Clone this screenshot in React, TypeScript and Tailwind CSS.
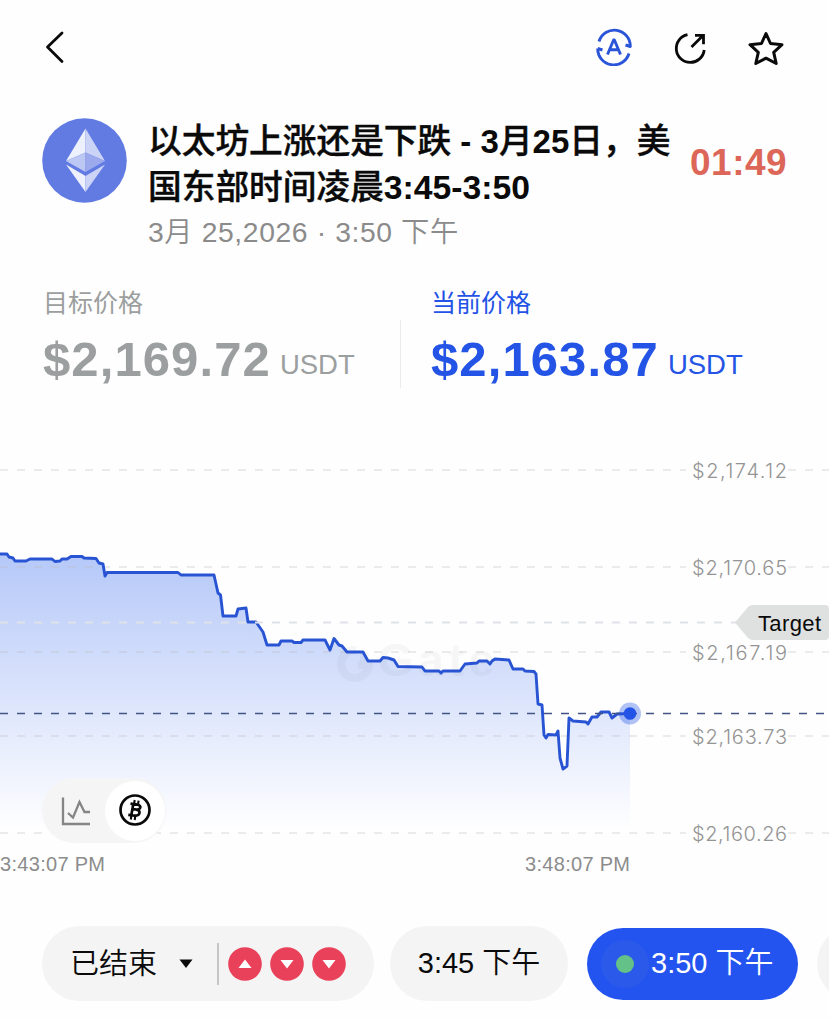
import type { ReactNode } from "react";

const LINE =
  "0,554 7,554 9,557 13,558 15,561 26,561 30,559 52,559 55,561.5 60,561 62,559 67,559 71,556.5 82,556.5 84,558 96,558.5 99,563 103,564 105,576 107,572.5 178,572.5 181,575 214,575 218,593 220.5,595 223,616 236,616 238,609 246,608 248,622 256,622 263,632 267,645 279,645 281,641 292,641 294,642.5 301,642.5 303,640 325,640 330,650 334,638.5 339,645 342,646 347,652 363,652 368,661 380,661 383,657.5 388,658 394,660 398,666.5 422,667 425,671 439,671 441,673 443,671 460,671 465,664 477,663 479,661 487,661 490,664 492,661 495,659 509,660 513,669 523,669 525,671 534,671.5 536,674 538,704 542,705 544,735 546,738 548,734.5 556,735 558,731 560,758 563,769 567,766 569,718 573,721 586,722 588,724 592,717 597,717 601,712 609,712 612,718 617,714 630,713.5";

const TICKS = [
  { y: 470, label: "$2,174.12" },
  { y: 567, label: "$2,170.65" },
  { y: 652, label: "$2,167.19" },
  { y: 736, label: "$2,163.73" },
  { y: 833, label: "$2,160.26" },
];

function Header() {
  return (
    <header className="flex h-24 items-center justify-between pr-[44px] pl-[45px]">
      <svg width="20" height="36" viewBox="0 0 20 36" fill="none" stroke="#0a0a0a" strokeWidth="2.8" strokeLinecap="round" strokeLinejoin="round" className="-mt-[2px]">
        <path d="M17 4 2.5 18 17 32.500" />
      </svg>
      <div className="flex items-center gap-[38px]">
        <svg width="38" height="38" viewBox="0 0 38 38" fill="none" stroke="#2b55d9" strokeWidth="2.9" strokeLinejoin="round" className="-mt-[2px]">
          <path d="M4 13.500A16 16 0 0 1 35.300 18.500L30.500 17M2.700 20.500A16 16 0 0 0 34 25.500M2.700 20.500 7.500 22" />
          <path d="M12.500 26.500 18.600 12h.8l6.100 14.500M14.800 21.800h8.400" strokeWidth="2.9" />
        </svg>
        <svg width="38" height="38" viewBox="0 0 38 38" fill="none" stroke="#0a0a0a" strokeWidth="2.800" className="mt-[2px]">
          <path d="M16.500 4.700A14 14 0 1 0 33.200 20M20.500 17 32 5.500M24 5.300h8.500v9" />
        </svg>
        <svg width="38" height="38" viewBox="0 0 38 38" fill="none" stroke="#0a0a0a" strokeWidth="3" strokeLinejoin="round" className="mt-px">
          <path d="M19 3.500l4.500 10 11.500 1.200-8.300 7.700 2.500 11.100L19 28.200l-10.200 5.300 2.500-11.100L3 14.700l11.500-1.200z" />
        </svg>
      </div>
    </header>
  );
}

function EthLogo() {
  return (
    <svg width="85" height="85" viewBox="0 0 85 85" className="shrink-0">
      <circle cx="42.500" cy="42.500" r="42.300" fill="#627be3" />
      <path d="M43.500 10.500 24 43l19.500-8.500z" fill="#edf0fd" />
      <path d="M43.500 10.500 63 43l-19.500-8.500z" fill="#cbd3f7" />
      <path d="M24 43l19.500-8.500V54z" fill="#bdc7f4" />
      <path d="M63 43l-19.500-8.500V54z" fill="#9ca9ec" />
      <path d="M24 46.500l19.500 11.500v16z" fill="#edf0fd" />
      <path d="M63 46.500L43.500 58v16z" fill="#cbd3f7" />
    </svg>
  );
}

function Market() {
  return (
    <section className="flex h-[162px] items-start pt-[22px] pl-[42px]">
      <EthLogo />
      <div className="mt-px ml-[21px] w-[542px]">
        <h1 className="text-[33.700px] leading-[44.500px] font-medium whitespace-nowrap text-[#0a0a0a]">
          <span className="block">
            <span className="[-webkit-text-stroke:0.4px]">以太坊上涨还是下跌</span>
            <span className="text-[33px] font-bold"> - 3</span>
            <span className="[-webkit-text-stroke:0.4px]">月</span>
            <span className="text-[33px] font-bold">25</span>
            <span className="[-webkit-text-stroke:0.4px]">日，美</span>
          </span>
          <span className="block">
            <span className="[-webkit-text-stroke:0.4px]">国东部时间凌晨</span>
            <span className="font-bold">3:45-3:50</span>
          </span>
        </h1>
        <p className="mt-[3px] text-[28.300px] leading-[40px] font-[350] tracking-[0.6px] whitespace-nowrap text-[#8b8b8b]">
          3月 25,2026 · 3:50 下午
        </p>
      </div>
      <p className="mt-[23px] text-[37px] leading-[44px] font-bold tracking-[0.5px] text-[#dc6758]">01:49</p>
    </section>
  );
}

function Price({ label, value, className }: { label: string; value: string; className: string }) {
  return (
    <div className={className}>
      <p className="text-[25px] leading-[36px]">{label}</p>
      <p className="mt-[8px] flex items-baseline gap-[9px] whitespace-nowrap">
        <span className="text-[49px] leading-[60px] font-bold tracking-[1.1px]">{value}</span>
        <span className="relative -top-[2px] text-[27.500px]">USDT</span>
      </p>
    </div>
  );
}

function Chart() {
  return (
    <section className="relative h-[460px]">
      <svg width="829" height="460" viewBox="0 430 829 460" className="block">
        <defs>
          <linearGradient id="area" x1="0" y1="554" x2="0" y2="833" gradientUnits="userSpaceOnUse">
            <stop offset="0" stopColor="#b5c8f8" />
            <stop offset="0.55" stopColor="#dee6fc" />
            <stop offset="1" stopColor="#ffffff" />
          </linearGradient>
        </defs>
        <polygon points={`${LINE} 630,833 0,833`} fill="url(#area)" />
        {TICKS.map((t) => (
          <g key={t.y}>
            <path d={`M0 ${t.y}H686M788 ${t.y}H829`} stroke="#bbbbbb" strokeOpacity="0.36" strokeWidth="1.500" strokeDasharray="8 9" />
            <text x="692" y={t.y + 8} textLength="95" fontSize="20" fontWeight="300" fill="#949494" className="font-['Inter']">
              {t.label}
            </text>
          </g>
        ))}
        <g opacity="0.028">
          <path d="M356 650a14 14 0 1 0 13 15h-11" fill="none" stroke="#000" strokeWidth="8" />
          <path d="M360 652h9v10h-9z" />
          <text x="378" y="676" fontSize="46" fontWeight="700" textLength="116">
            Gate
          </text>
        </g>
        <polyline points={LINE} fill="none" stroke="#2854d4" strokeWidth="2.900" strokeLinejoin="round" />
        <path d="M0 622.500H736" stroke="#dfe2e8" strokeWidth="2" strokeDasharray="8 9" />
        <path d="M0 713.500H829" stroke="#415483" strokeWidth="1.300" strokeDasharray="8 9" />
        <circle cx="630" cy="713.500" r="11" fill="#2354e6" fillOpacity="0.35" />
        <circle cx="630" cy="713.500" r="6.300" fill="#2354e6" />
        <path d="M735 622.500 748 607q2-2 5-2h72q4 0 4 4v27q0 4-4 4h-72q-3 0-5-2z" fill="#dfe1e1" />
        <text x="758" y="630.500" textLength="63" fontSize="22" fill="#0a0a0a">
          Target
        </text>
        <g fontSize="20" fill="#8c8c8c">
          <text x="0" y="870.500" textLength="105">3:43:07 PM</text>
          <text x="525" y="870.500" textLength="105">3:48:07 PM</text>
        </g>
      </svg>
      <div className="absolute top-[348px] left-[42px] flex h-[65px] w-[124px] items-center justify-between rounded-full bg-[#f5f5f5] pr-[1px] pl-[18px]">
        <svg width="32" height="32" viewBox="0 0 32 32" fill="none" stroke="#858585" strokeWidth="2.300">
          <path d="M3 2.500v26.500h27" />
          <path d="M8 18l5 4.500 6.500-15.500 5 10h5.500" />
        </svg>
        <div className="flex size-[60px] items-center justify-center rounded-full bg-white">
          <svg width="34" height="34" viewBox="0 0 34 34" fill="none" stroke="#0a0a0a" strokeWidth="2.700" className="-mt-[2px]">
            <circle cx="17" cy="17" r="14.500" />
            <path d="M12.500 10.700l7 .9c4.500 1 3.200 5-.8 4.900l-4-.4M15.300 11l-1.900 10.800M10.300 21.800l6.500.9c6 0 6-5.500 1.400-6.100" />
            <path d="M16.700 7l-.6 4M20.600 7.700l-.6 4M13.400 22.500l-.6 4M17.300 23l-.6 4" strokeWidth="2.100" />
          </svg>
        </div>
      </div>
    </section>
  );
}

function Result({ up = false }: { up?: boolean }) {
  return (
    <svg width="34" height="34" viewBox="0 0 34 34">
      <circle cx="17" cy="17" r="16.800" fill="#e9415a" />
      <path d={up ? "M10.500 21 17 12.500 23.500 21z" : "M10.500 13 17 21.500 23.500 13z"} fill="#fff" />
    </svg>
  );
}

function Pill({ className, children }: { className: string; children?: ReactNode }) {
  return <div className={`flex shrink-0 items-center rounded-full whitespace-nowrap ${className}`}>{children}</div>;
}

function Rounds() {
  return (
    <nav className="mt-[36px] flex h-[75px] items-center overflow-hidden pl-[42px] text-[29px] font-[350] text-[#0a0a0a]">
      <Pill className="h-[75px] w-[332px] bg-[#f4f4f4] pl-[28px]">
        <span className="pt-[2px]">已结束</span>
        <svg width="14" height="10" viewBox="0 0 14 10" className="ml-[22px]">
          <path d="M.5.500h13L7 9z" fill="#0a0a0a" />
        </svg>
        <span className="ml-[24px] h-[42px] w-[2px] bg-[#c5c5c5]" />
        <span className="ml-[9px] flex gap-2">
          <Result up />
          <Result />
          <Result />
        </span>
      </Pill>
      <Pill className="ml-4 h-[75px] w-[178px] justify-center bg-[#f4f4f4] pt-px">3:45 下午</Pill>
      <Pill className="ml-[19px] h-[72px] w-[211px] bg-[#2354f0] pl-[14px] text-white">
        <span className="flex size-[48px] items-center justify-center rounded-full bg-[#2b5aea]">
          <span className="size-[18px] rounded-full bg-[#64c288]" />
        </span>
        <span className="ml-[2px] pt-px">3:50 下午</span>
      </Pill>
      <Pill className="ml-[19px] h-[75px] w-[178px] bg-[#f4f4f4]" />
    </nav>
  );
}

export default function App() {
  return (
    <main className="h-[1019px] w-[829px] overflow-hidden bg-[#fefefe] font-['Liberation_Sans','Noto_Sans_CJK_SC',sans-serif]">
      <Header />
      <Market />
      <section className="flex h-[172px] items-start pt-[27px]">
        <Price label="目标价格" value="$2,169.72" className="w-[357px] pl-[43px] text-[#9c9f9f]" />
        <span className="mt-[35px] ml-[43px] h-[68px] w-px bg-[#ebebeb]" />
        <Price label="当前价格" value="$2,163.87" className="pl-[30px] text-[#2354e6]" />
      </section>
      <Chart />
      <Rounds />
    </main>
  );
}
